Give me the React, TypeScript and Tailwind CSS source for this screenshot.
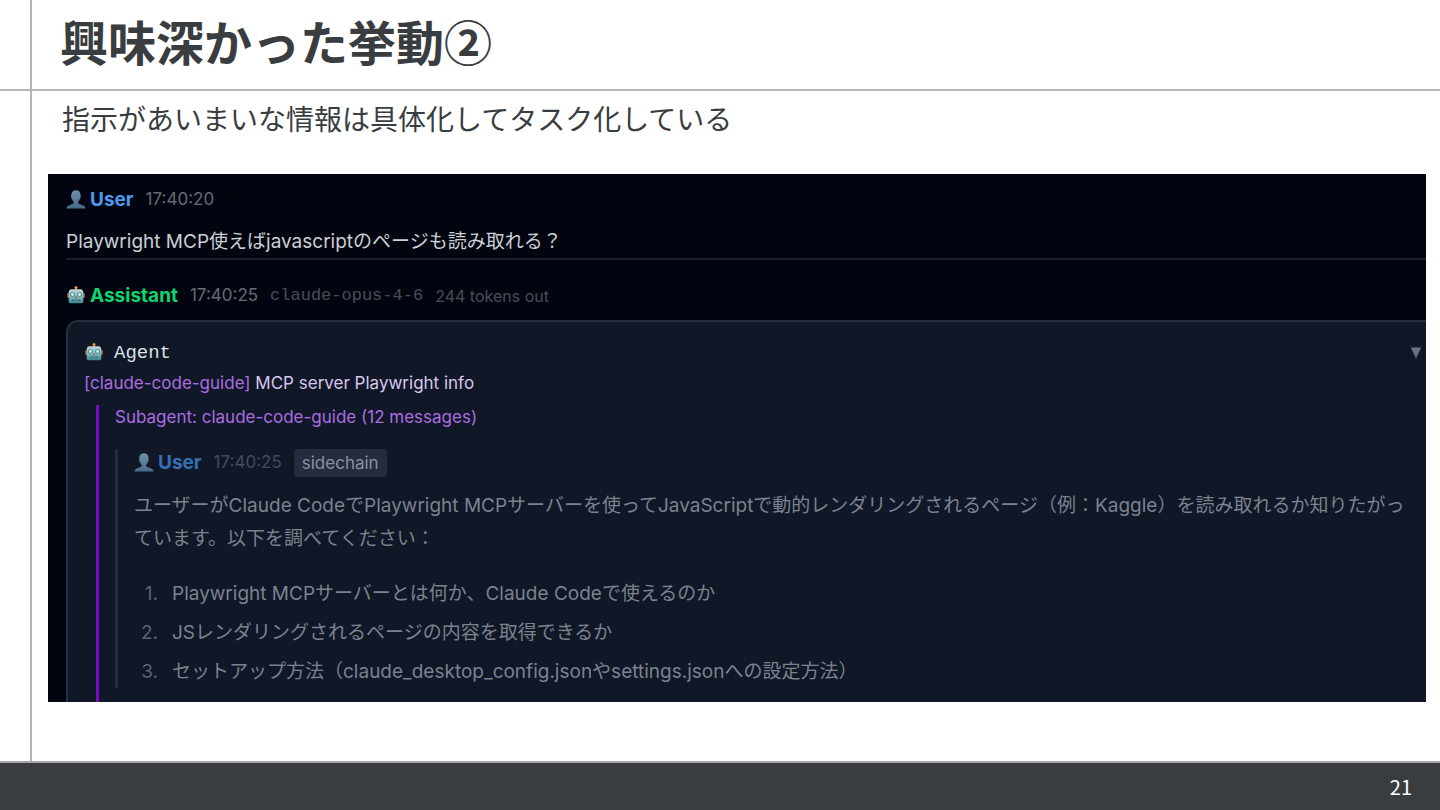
import type { ReactNode } from "react";

const STEPS = [
  "Playwright MCPサーバーとは何か、Claude Codeで使えるのか",
  "JSレンダリングされるページの内容を取得できるか",
  "セットアップ方法（claude_desktop_config.jsonやsettings.jsonへの設定方法）",
];

function PersonIcon() {
  return (
    <svg className="w-5 h-5 shrink-0" viewBox="0 0 20 20" aria-hidden="true">
      <defs>
        <linearGradient id="person" x1="0" y1="0" x2="0" y2="1">
          <stop offset="0" stopColor="#6d8fab" />
          <stop offset="1" stopColor="#486b88" />
        </linearGradient>
      </defs>
      <path
        fill="url(#person)"
        d="M10 .3C7.200.3 5.200 2.300 5.200 5.200c0 .5 0 .8.100 1.100-.6.300-.300 1.900.400 2.200.4 1.400 1.100 2.500 1.900 3.200v1.300c-.3 1-1.700 1.300-3.600 2C2 15.700.6 16.500.4 18.500h19.200c-.2-2-1.600-2.800-3.800-3.500-1.900-.7-3.300-1-3.600-2v-1.300c.8-.7 1.500-1.800 1.900-3.200.7-.3 1-1.900.4-2.200.1-.3.1-.6.100-1.100C14.600 2.300 12.800.3 10 .3z"
      />
    </svg>
  );
}

function RobotIcon() {
  return (
    <svg className="w-5 h-5 shrink-0" viewBox="0 0 20 20" aria-hidden="true">
      <defs>
        <linearGradient id="robot" x1="0" y1="0" x2="0" y2="1">
          <stop offset="0" stopColor="#c3d5d8" />
          <stop offset=".55" stopColor="#7fb9bf" />
          <stop offset="1" stopColor="#3d858e" />
        </linearGradient>
      </defs>
      <path d="M9.200 1.500h1.600v3H9.200z" fill="#b98b2b" />
      <circle cx="10" cy="1.500" r="1.500" fill="#e39a3c" />
      <rect x="1.200" y="7" width="2.400" height="5" rx="1" fill="#a8654f" />
      <rect x="16.400" y="7" width="2.400" height="5" rx="1" fill="#a8654f" />
      <path
        d="M5.500 3.300h9c2 0 2.800 1.400 2.800 3.500v8.700c0 1-.7 1.700-1.700 1.700H4.400c-1 0-1.700-.7-1.700-1.700V6.800c0-2.100.8-3.500 2.800-3.500z"
        fill="url(#robot)"
      />
      <circle cx="6.500" cy="8.500" r="2.300" fill="#2e8994" />
      <circle cx="13.500" cy="8.500" r="2.300" fill="#2e8994" />
      <circle cx="6.500" cy="8.500" r="1.400" fill="#d8f4ee" />
      <circle cx="13.500" cy="8.500" r="1.400" fill="#d8f4ee" />
      <path d="M10 9.800l1.300 2.200H8.700z" fill="#c0504c" />
      <path d="M6 13.500h8v1.600H6z" fill="#326d77" />
      <path d="M8 13.500v1.600M10 13.500v1.600M12 13.500v1.600" stroke="#a5cdd0" strokeWidth=".5" />
    </svg>
  );
}

interface MessageHeaderProps {
  icon: ReactNode;
  name: string;
  nameClass: string;
  timeClass: string;
  time: string;
  children?: ReactNode;
}

function MessageHeader({ icon, name, nameClass, timeClass, time, children }: MessageHeaderProps) {
  return (
    <div className="flex items-center gap-3 h-7 text-[17px]">
      <div className="flex items-center gap-1">
        {icon}
        <span className={`text-[19px] font-bold ${nameClass}`}>{name}</span>
      </div>
      <time className={timeClass}>{time}</time>
      {children}
    </div>
  );
}

function SidechainMessage() {
  return (
    <div className="mt-5 border-l-3 border-[#242c3d] pl-4">
      <MessageHeader
        icon={<PersonIcon />}
        name="User"
        nameClass="text-[#3670b2]"
        timeClass="text-[#454c5a]"
        time="17:40:25"
      >
        <span className="bg-[#242c3d] text-[#8b919d] rounded px-2 leading-7">sidechain</span>
      </MessageHeader>
      <div className="text-[19px] text-[#7c828e]">
        <p className="mt-3 leading-[33px]">
          ユーザーがClaude CodeでPlaywright MCPサーバーを使ってJavaScriptで動的レンダリングされるページ（例：Kaggle）を読み取れるか知りたがっています。以下を調べてください：
        </p>
        <ol className="mt-5.5 space-y-1.5">
          {STEPS.map((step, i) => (
            <li key={step} className="flex gap-3.5 leading-[33px]">
              <span className="w-6 shrink-0 text-right text-[#5b6270]">{i + 1}.</span>
              {step}
            </li>
          ))}
        </ol>
      </div>
    </div>
  );
}

function AgentCard() {
  return (
    <div className="mt-2.5 bg-[#101726] border-t-2 border-l-2 border-[#262d3c] rounded-tl-xl pl-4 pt-4">
      <button type="button" className="w-full flex items-center justify-between h-[30px] pr-1">
        <span className="flex items-center gap-2.5">
          <RobotIcon />
          <span className="font-['Liberation_Mono',monospace] text-[19px] text-[#dde0e6]">Agent</span>
        </span>
        <svg className="w-3 h-3" viewBox="0 0 12 12" aria-hidden="true">
          <path d="M.8.500h10.400L6 11.500z" fill="#6a7180" />
        </svg>
      </button>
      <p className="mt-px text-[17px] leading-7 text-[#d9c6ee]">
        <span className="text-[#ac6de2]">[claude-code-guide]</span> MCP server Playwright info
      </p>
      <div className="mt-2 ml-3 border-l-3 border-[#7a09cd] pl-4 pr-2 pb-3.5">
        <p className="text-[17px] leading-6 text-[#ac6de2]">Subagent: claude-code-guide (12 messages)</p>
        <SidechainMessage />
      </div>
    </div>
  );
}

function ChatLog() {
  return (
    <section className="bg-[#02050f] pl-[18px] pt-3 overflow-hidden font-[Inter,'Noto_Sans_CJK_JP',sans-serif]">
      <div className="border-b-2 border-[#1a1f2b]">
        <MessageHeader
          icon={<PersonIcon />}
          name="User"
          nameClass="text-[#4f98f0]"
          timeClass="text-[#656b77]"
          time="17:40:20"
        />
        <p className="mt-3 text-[19px] leading-8 text-[#cbcfd6]">
          Playwright MCP使えばjavascriptのページも読み取れる？
        </p>
      </div>
      <div className="pt-5.5">
        <MessageHeader
          icon={<RobotIcon />}
          name="Assistant"
          nameClass="text-[#0ed370]"
          timeClass="text-[#656b77]"
          time="17:40:25"
        >
          <span className="font-['Liberation_Mono',monospace] text-[#474e5b]">claude-opus-4-6</span>
          <span className="text-base text-[#474e5b]">244 tokens out</span>
        </MessageHeader>
      </div>
      <AgentCard />
    </section>
  );
}

export default function App() {
  return (
    <div
      lang="ja"
      className="min-h-screen flex flex-col bg-white text-[#393d40] font-['Noto_Sans_CJK_JP',sans-serif]"
    >
      <header className="flex border-b-2 border-[#b3b7b8]">
        <div className="w-8 shrink-0 border-r-2 border-[#b3b7b8]" />
        <h1 className="pl-7 pb-2 text-[48px] leading-[81px] font-bold">興味深かった挙動②</h1>
      </header>

      <main className="flex-1 flex">
        <div className="w-8 shrink-0 border-r-2 border-[#b3b7b8]" />
        <div className="flex-1 min-w-0 pl-4 pr-3.5 pb-6">
          <p className="pl-3.5 pt-1.5 pb-8.5 text-[28px] leading-[43px]">
            指示があいまいな情報は具体化してタスク化している
          </p>
          <ChatLog />
        </div>
      </main>

      <footer className="h-[49px] shrink-0 flex items-center justify-end pr-7 border-t-2 border-[#a3a7a8] bg-[#393d40] text-white text-xl">
        21
      </footer>
    </div>
  );
}
